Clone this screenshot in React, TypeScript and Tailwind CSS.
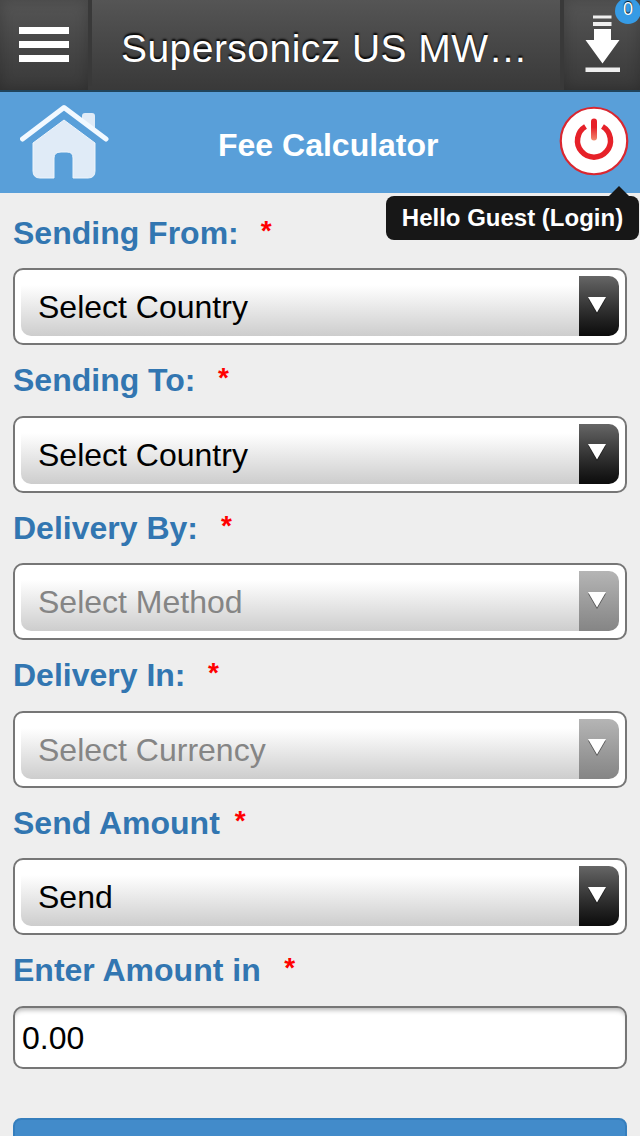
type Field = {
  label: string;
  value: string;
  gap: string;
  disabled?: boolean;
};

const fields: Field[] = [
  { label: 'Sending From:', value: 'Select Country', gap: 'ml-[22px]' },
  { label: 'Sending To:', value: 'Select Country', gap: 'ml-[22.5px]' },
  { label: 'Delivery By:', value: 'Select Method', gap: 'ml-[23px]', disabled: true },
  { label: 'Delivery In:', value: 'Select Currency', gap: 'ml-[22.5px]', disabled: true },
  { label: 'Send Amount', value: 'Send', gap: 'ml-[15px]' },
];

function FieldLabel({ text, gap }: { text: string; gap: string }) {
  return (
    <div className="flex h-[70.5px] items-center text-[32px] font-bold leading-9 text-[#3276b1]">
      <span>{text}</span>
      <span className={`${gap} pb-1 text-[28px] text-[#f00]`}>*</span>
    </div>
  );
}

function SelectBox({ value, disabled }: { value: string; disabled?: boolean }) {
  return (
    <button
      type="button"
      disabled={disabled}
      className="flex h-[77px] w-full rounded-[10px] border-2 border-[#767676] bg-white p-1.5 text-left"
    >
      <span
        className={`flex h-[60px] flex-1 items-center rounded-l-[10px] bg-linear-to-b from-white from-15% to-[#cdcdcd] pt-0.5 pl-[17px] text-[32px] leading-9 ${
          disabled ? 'text-[#858585]' : 'text-black'
        }`}
      >
        {value}
      </span>
      <span
        className={`flex h-[60px] w-10 justify-center rounded-r-[10px] bg-linear-to-b pt-[20.5px] pr-1 ${
          disabled ? 'from-[#b5b5b5] to-[#858585]' : 'from-[#666] to-[#0c0c0c]'
        }`}
      >
        <svg width="20" height="18" viewBox="0 0 20 18">
          <path d="M1 1.5h18L10 17z" fill="#000" opacity=".5" />
          <path d="M1 0h18L10 15.5z" fill="#fff" />
        </svg>
      </span>
    </button>
  );
}

function HomeIcon() {
  return (
    <svg width="90" height="76" viewBox="0 0 90 76" fill="none">
      <path
        d="M13 39 44 16l31 23v28q0 7-7 7H53V54q0-6-6-6h-6q-7 0-7 6v20H20q-7 0-7-7z"
        fill="#e0ebf7"
        stroke="#eef5fc"
      />
      <path d="M2.5 35 44 3.500 86 35" stroke="#599fd9" strokeWidth="9" />
      <path d="M62 17V12q0-3 3-3h7q3 0 3 3v15z" fill="#e0ebf7" />
      <path d="M2.5 35 44 3.500 86 35" stroke="#f2f9ff" strokeWidth="5" strokeLinecap="round" strokeLinejoin="round" />
    </svg>
  );
}

function PowerIcon() {
  return (
    <svg width="70" height="70" viewBox="0 0 70 70" fill="none">
      <defs>
        <linearGradient id="bar" x1="0" y1="0" x2="0" y2="1">
          <stop offset="0" stopColor="#e62129" />
          <stop offset="0.4" stopColor="#e62129" />
          <stop offset="1" stopColor="#f28b70" />
        </linearGradient>
      </defs>
      <circle cx="35" cy="35" r="33.25" fill="#fff" stroke="#da2730" strokeWidth="2.2" />
      <path d="M26.5 20.5a16.5 16.5 0 1 0 17 0" stroke="#e62129" strokeWidth="5.5" />
      <rect x="32" y="12.5" width="6" height="22" rx="3" fill="url(#bar)" />
    </svg>
  );
}

function DownloadIcon() {
  return (
    <svg width="36" height="58" viewBox="0 0 36 58" fill="#fff">
      <path d="M8 1.5H26.500V4.500H8zM8 8H26.500V12H8z" fill="#eee" />
      <path d="M9 15H26V26h8.500L17.500 49.500 .5 26h8.500z" />
      <path d="M.5 53.500h34.500v4.500H.5z" fill="#eee" />
    </svg>
  );
}

export default function App() {
  return (
    <div className="flex h-[1136px] w-[640px] flex-col overflow-hidden bg-[#eee] font-['Liberation_Sans',Arial,sans-serif]">
      <header className="flex h-[92px] shrink-0 border-b-2 border-[#20455d] bg-linear-to-b from-[#555] to-[#393939]">
        <button
          type="button"
          className="flex h-full w-[88px] flex-col items-start gap-[7px] pt-[26.5px] pl-[19px] shadow-[inset_0_0_14px_rgba(0,0,0,0.2)]"
        >
          <span className="h-[7px] w-[50px] bg-white" />
          <span className="h-[7px] w-[50px] bg-white" />
          <span className="h-[7px] w-[50px] bg-white" />
        </button>
        <div className="h-[86px] w-1 bg-[#393939]" />
        <h1 className="w-[468px] pt-[26px] pl-[29px] text-[39px] leading-[46px] tracking-[0.46px] whitespace-nowrap text-white [text-shadow:0_-2px_2px_#000]">
          Supersonicz US MW…
        </h1>
        <div className="h-[88px] w-1 bg-[#393939]" />
        <button
          type="button"
          className="relative flex h-full flex-1 pt-3.5 pl-[21px] shadow-[inset_0_0_14px_rgba(0,0,0,0.2)]"
        >
          <DownloadIcon />
          <span className="absolute -top-0.5 -right-[1px] flex size-[26px] items-center justify-center rounded-full bg-[#369be5] pb-1 text-[18px] text-white [text-shadow:0_-1px_1px_#000]">
            0
          </span>
        </button>
      </header>

      <nav className="relative flex h-[101px] shrink-0 items-start bg-[#599fd9]">
        <div className="w-[218px] pt-3 pl-5">
          <HomeIcon />
        </div>
        <h2 className="flex-1 pt-[35px] text-[32px] leading-9 font-bold text-white">Fee Calculator</h2>
        <div className="pt-[14px] pr-[11px]">
          <PowerIcon />
        </div>
        <div className="absolute top-[104px] right-[1px] flex h-11 w-[253px] items-center justify-center rounded-lg bg-[#171717] text-2xl font-bold text-white">
          Hello Guest (Login)
          <svg className="absolute -top-2.5 right-[9px]" width="22" height="11" viewBox="0 0 22 11">
            <path d="M0 11 11 0l11 11z" fill="#171717" />
          </svg>
        </div>
      </nav>

      <main className="px-[13px] pt-[4.5px]">
        {fields.map((field) => (
          <section key={field.label}>
            <FieldLabel text={field.label} gap={field.gap} />
            <SelectBox value={field.value} disabled={field.disabled} />
          </section>
        ))}
        <FieldLabel text="Enter Amount in" gap="ml-[23.5px]" />
        <input
          type="text"
          defaultValue="0.00"
          className="block h-[63px] w-full rounded-[10px] border-2 border-[#767676] bg-white px-[7px] pt-0.5 text-[32px] text-black shadow-[inset_0_5px_5px_-3px_rgba(0,0,0,0.3)]"
        />
        <button type="button" className="mt-[49px] block h-16 w-full rounded-lg border-2 border-[#357ebd] bg-[#428bca]" />
      </main>
    </div>
  );
}
